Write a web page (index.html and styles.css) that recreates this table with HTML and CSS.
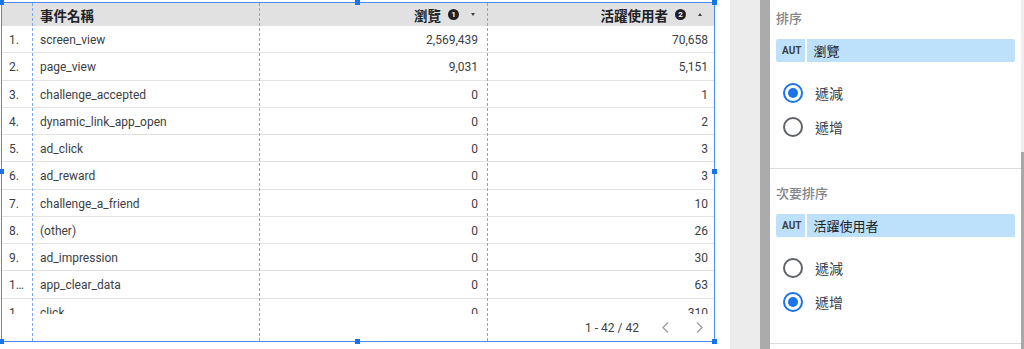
FILE: index.html
```html
<!DOCTYPE html>
<html lang="zh-Hant">
<head>
<meta charset="utf-8">
<title>Table</title>
<link rel="stylesheet" href="styles.css">
</head>
<body>
<div class="app">
  <div class="canvas">
    <div class="frame">
      <div class="table">
        <div class="row head">
          <div class="c idx"></div>
          <div class="c name">事件名稱</div>
          <div class="c num">瀏覽<span class="badge">1</span><span class="tri down"></span></div>
          <div class="c num last">活躍使用者<span class="badge">2</span><span class="tri up"></span></div>
        </div>
        <div class="tbody">
          <div class="row"><div class="c idx">1.</div><div class="c name">screen_view</div><div class="c num">2,569,439</div><div class="c num last">70,658</div></div>
          <div class="row"><div class="c idx">2.</div><div class="c name">page_view</div><div class="c num">9,031</div><div class="c num last">5,151</div></div>
          <div class="row"><div class="c idx">3.</div><div class="c name">challenge_accepted</div><div class="c num">0</div><div class="c num last">1</div></div>
          <div class="row"><div class="c idx">4.</div><div class="c name">dynamic_link_app_open</div><div class="c num">0</div><div class="c num last">2</div></div>
          <div class="row"><div class="c idx">5.</div><div class="c name">ad_click</div><div class="c num">0</div><div class="c num last">3</div></div>
          <div class="row"><div class="c idx">6.</div><div class="c name">ad_reward</div><div class="c num">0</div><div class="c num last">3</div></div>
          <div class="row"><div class="c idx">7.</div><div class="c name">challenge_a_friend</div><div class="c num">0</div><div class="c num last">10</div></div>
          <div class="row"><div class="c idx">8.</div><div class="c name">(other)</div><div class="c num">0</div><div class="c num last">26</div></div>
          <div class="row"><div class="c idx">9.</div><div class="c name">ad_impression</div><div class="c num">0</div><div class="c num last">30</div></div>
          <div class="row"><div class="c idx">10.</div><div class="c name">app_clear_data</div><div class="c num">0</div><div class="c num last">63</div></div>
          <div class="row"><div class="c idx">11.</div><div class="c name">click</div><div class="c num">0</div><div class="c num last">310</div></div>
        </div>
        <div class="pager">
          <span class="range">1 - 42 / 42</span>
          <svg class="chev" width="7" height="11" viewBox="0 0 7 11"><polyline points="6,0.5 1,5.5 6,10.5" fill="none" stroke="#9aa0a6" stroke-width="1.4"/></svg>
          <svg class="chev next" width="7" height="11" viewBox="0 0 7 11"><polyline points="1,0.5 6,5.5 1,10.5" fill="none" stroke="#9aa0a6" stroke-width="1.4"/></svg>
        </div>
      </div>
      <div class="guides"><span></span><span class="g"></span><span class="g"></span><span class="g"></span></div>
      <span class="handle h-tl"></span><span class="handle h-tc"></span><span class="handle h-tr"></span>
      <span class="handle h-ml"></span><span class="handle h-mr"></span>
      <span class="handle h-bl"></span><span class="handle h-bc"></span><span class="handle h-br"></span>
    </div>
  </div>
  <div class="gutter"></div>
  <div class="strip"></div>
  <div class="panel">
    <div class="panel-inner">
      <section class="sec">
        <div class="label">排序</div>
        <div class="chip"><span class="aut">AUT</span><span class="chip-text">瀏覽</span></div>
        <div class="radios">
          <div class="radio on"><span class="ring"></span><span class="rl">遞減</span></div>
          <div class="radio"><span class="ring"></span><span class="rl">遞增</span></div>
        </div>
      </section>
      <section class="sec">
        <div class="label">次要排序</div>
        <div class="chip"><span class="aut">AUT</span><span class="chip-text">活躍使用者</span></div>
        <div class="radios">
          <div class="radio"><span class="ring"></span><span class="rl">遞減</span></div>
          <div class="radio on"><span class="ring"></span><span class="rl">遞增</span></div>
        </div>
      </section>
    </div>
  </div>
  <div class="scroll"><div class="thumb"></div></div>
</div>
</body>
</html>
```

FILE: styles.css
```css
* { box-sizing: border-box; }
html, body { margin: 0; padding: 0; background: #fff; }
body {
  font-family: "Roboto", "Noto Sans CJK TC", sans-serif;
  color: #202124;
  width: 1024px;
  height: 349px;
  overflow: hidden;
}
.app { display: flex; height: 349px; }

.canvas { width: 730px; flex: none; padding: 2px 0 0 1px; background: #fff; }
.frame {
  position: relative;
  width: 714px;
  height: 340px;
  border: 1px solid #4a8af4;
}
.table { display: flex; flex-direction: column; height: 100%; }

.row {
  display: grid;
  grid-template-columns: 30px 227px 228px 1fr;
  height: 27.25px;
  padding-top: 2px;
  border-bottom: 1px solid #e3e3e3;
  align-items: center;
  font-size: 12px;
  color: #3c4043;
}
.row.head {
  height: 23px;
  padding-top: 0;
  background: #e1e1e1;
  border-bottom: 0;
  font-size: 13.5px;
  font-weight: 700;
  color: #202124;
}
.c { white-space: nowrap; overflow: hidden; text-overflow: ellipsis; }
.c.idx { padding: 0 8px 0 7px; }
.c.name { padding-left: 8px; }
.c.num { text-align: right; padding-right: 9px; }
.c.num.last { padding-right: 6px; }
.head .c.num {
  display: flex;
  justify-content: flex-end;
  align-items: center;
  padding-right: 12px;
}
.badge {
  width: 11px; height: 11px;
  border-radius: 50%;
  background: #202124;
  color: #fff;
  font-size: 8px;
  font-weight: 700;
  line-height: 11px;
  text-align: center;
  margin-left: 7px;
  font-family: "Roboto", sans-serif;
}
.tri { width: 0; height: 0; margin-left: 12px; border-left: 2.5px solid transparent; border-right: 2.5px solid transparent; }
.tri.down { border-top: 3px solid #3c4043; }
.tri.up { border-bottom: 3px solid #3c4043; }

.tbody { height: 288px; overflow: hidden; flex: none; }

.pager {
  flex: 1;
  display: flex;
  align-items: center;
  justify-content: flex-end;
  padding-right: 11px;
  font-size: 12px;
  color: #3c4043;
}
.range { margin-right: 23px; }
.chev.next { margin-left: 27px; }

.guides {
  position: absolute;
  inset: 0;
  display: grid;
  grid-template-columns: 30px 227px 228px 1fr;
  pointer-events: none;
}
.guides .g { border-left: 1px dashed #7aa9f2; }

.handle {
  position: absolute;
  width: 5px; height: 5px;
  background: #1a73e8;
}
.h-tl { left: -3px; top: -3px; }
.h-tc { left: 353px; top: -3px; }
.h-tr { right: -3px; top: -3px; }
.h-ml { left: -3px; top: 166px; }
.h-mr { right: -3px; top: 166px; }
.h-bl { left: -3px; bottom: -3px; }
.h-bc { left: 353px; bottom: -3px; }
.h-br { right: -3px; bottom: -3px; }

.gutter { width: 30px; flex: none; background: #ececec; }
.strip { width: 10px; flex: none; background: #ababab; }

.panel { width: 251px; flex: none; overflow: hidden; background: #fff; }
.panel-inner { margin-top: -6px; }
.sec {
  padding: 17px 6px 24px 6px;
  border-bottom: 1px solid #dadce0;
}
.label {
  height: 16px;
  line-height: 16px;
  font-size: 13px;
  font-weight: 500;
  color: #80868b;
  margin-bottom: 12px;
}
.chip {
  display: flex;
  align-items: center;
  height: 23px;
  background: #bde0fb;
  border-radius: 2px;
}
.aut {
  font-size: 10px;
  font-weight: 700;
  color: #3c4043;
  padding: 0 4px 0 6px;
  height: 100%;
  line-height: 23px;
  border-right: 2px solid #fff;
}
.chip-text { padding-left: 6px; font-size: 13px; color: #202124; }
.radios { margin-top: 14px; }
.radio {
  display: flex;
  align-items: center;
  height: 34px;
  padding-left: 7px;
}
.ring {
  width: 20px; height: 20px;
  border-radius: 50%;
  border: 2px solid #5f6368;
  display: flex;
  align-items: center;
  justify-content: center;
  flex: none;
}
.radio.on .ring { border-color: #1a73e8; }
.radio.on .ring::after {
  content: "";
  width: 10px; height: 10px;
  border-radius: 50%;
  background: #1a73e8;
}
.rl { margin-left: 12px; font-size: 14px; color: #3c4043; }

.scroll { width: 3px; flex: none; background: #eeeeee; }
.thumb { margin-top: 152px; height: 197px; background: #a9a9a9; }
```
